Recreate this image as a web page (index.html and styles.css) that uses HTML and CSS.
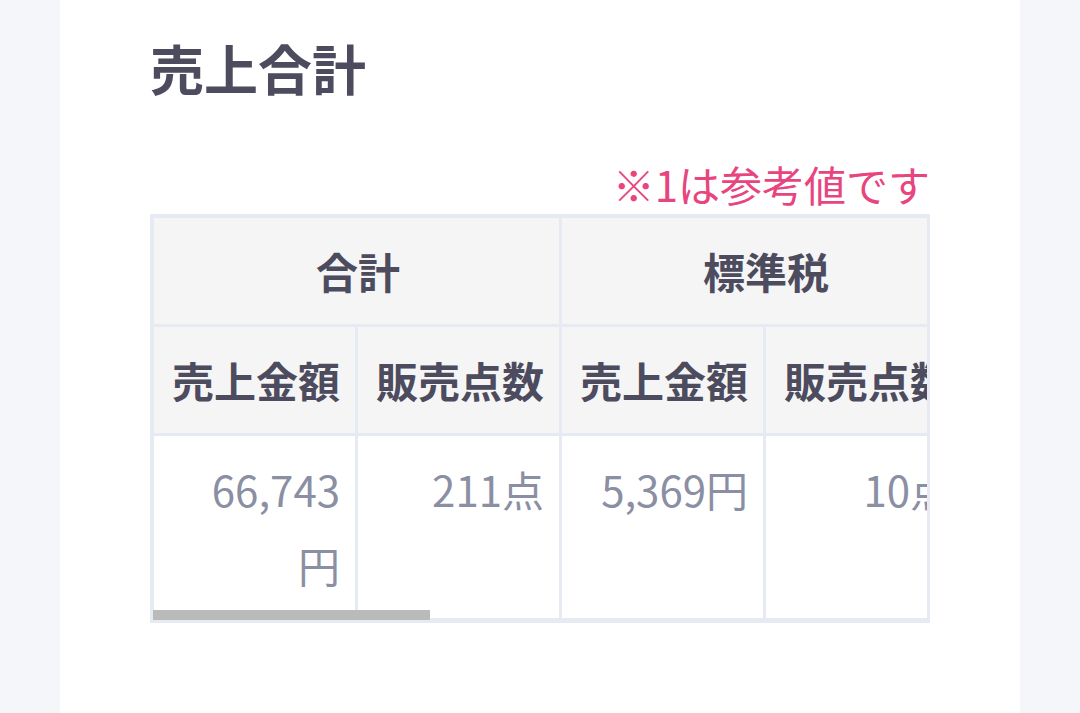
FILE: index.html
```html
<!DOCTYPE html>
<html lang="ja">
<head>
<meta charset="utf-8">
<title>売上合計</title>
<link rel="stylesheet" href="styles.css">
</head>
<body>
<main class="card">
  <h1 class="title">売上合計</h1>
  <p class="note">※1は参考値です</p>
  <div class="table-wrap">
    <table class="sales">
      <thead>
        <tr>
          <th class="group" colspan="2">合計</th>
          <th class="group" colspan="2">標準税</th>
          <th class="group" colspan="2">軽減税率</th>
        </tr>
        <tr>
          <th class="sub">売上金額</th>
          <th class="sub">販売点数</th>
          <th class="sub">売上金額</th>
          <th class="sub">販売点数</th>
          <th class="sub">売上金額</th>
          <th class="sub">販売点数</th>
        </tr>
      </thead>
      <tbody>
        <tr>
          <td class="num">66,743円</td>
          <td class="num">211点</td>
          <td class="num">5,369円</td>
          <td class="num">10点</td>
          <td class="num">61,374円</td>
          <td class="num">201点</td>
        </tr>
      </tbody>
    </table>
    <div class="thumb"></div>
  </div>
</main>
</body>
</html>
```

FILE: styles.css
```css
html, body {
  margin: 0;
  padding: 0;
}

body {
  background: #f5f6fa;
  font-family: "Noto Sans CJK JP", "Noto Sans", sans-serif;
  color: #4b4b5d;
}

.card {
  margin: 0 60px;
  background: #ffffff;
  min-height: 713px;
  box-sizing: border-box;
  padding: 27px 90px 0;
}

.title {
  margin: 0;
  font-size: 54px;
  line-height: 81px;
  font-weight: 700;
  color: #4c4c5e;
}

.note {
  margin: 51px 0 0;
  text-align: right;
  font-size: 42px;
  line-height: 50px;
  color: #e8457f;
}

.table-wrap {
  position: relative;
  margin-top: 5px;
  border: 1px solid #e6ebf3;
  border-right-width: 3px;
  border-bottom-width: 2px;
  overflow: hidden;
}

.sales {
  border-collapse: separate;
  border-spacing: 0;
  border-top: 3px solid #e6eaf2;
  border-left: 3px solid #e6eaf2;
}

.sales th,
.sales td {
  border-right: 3px solid #e6eaf2;
  border-bottom: 3px solid #e6eaf2;
  font-size: 42px;
  line-height: 76px;
  padding: 15px 15px 15px 18px;
  width: 168px;
}

.sales th {
  background: #f5f5f6;
  font-weight: 700;
  color: #4c4c5e;
  text-align: center;
  white-space: nowrap;
}

.sales td.num {
  background: #ffffff;
  color: #8a8fa3;
  font-weight: 400;
  text-align: right;
  vertical-align: top;
}

.thumb {
  position: absolute;
  left: 2px;
  bottom: 1px;
  width: 277px;
  height: 10px;
  background: #bababa;
}
```
